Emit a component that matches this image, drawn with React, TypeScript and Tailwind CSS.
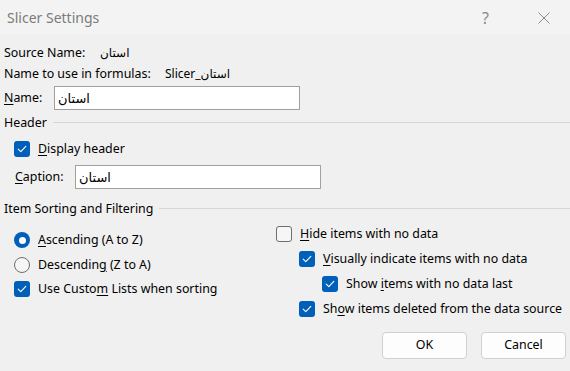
import { ReactNode } from "react";

const font = { fontFamily: '"Noto Sans", "DejaVu Sans", sans-serif' };

function U(props: { children: ReactNode }) {
    return <span className="underline underline-offset-2">{props.children}</span>;
}

function CheckBox(props: { checked: boolean }) {
    if (!props.checked) {
        return <div className="w-[16px] h-[16px] rounded-[3px] border border-[#6e6e6e] bg-[#f6f6f6] shrink-0"></div>;
    }
    return (
        <div className="w-[16px] h-[16px] rounded-[3px] bg-[#005fb8] flex items-center justify-center shrink-0">
            <svg width="10" height="8" viewBox="0 0 10 8" fill="none">
                <path d="M1.2 4.2 L3.8 6.6 L8.8 1.4" stroke="white" strokeWidth="1.1" strokeLinecap="round" strokeLinejoin="round" />
            </svg>
        </div>
    );
}

function Radio(props: { checked: boolean }) {
    if (!props.checked) {
        return <div className="w-[16px] h-[16px] rounded-full border border-[#6e6e6e] bg-[#f6f6f6] shrink-0"></div>;
    }
    return (
        <div className="w-[16px] h-[16px] rounded-full bg-[#005fb8] flex items-center justify-center shrink-0">
            <div className="w-[7px] h-[7px] rounded-full bg-white"></div>
        </div>
    );
}

function Option(props: { box: ReactNode, children: ReactNode, indent?: string }) {
    return (
        <div className={"h-[20px] flex items-center gap-[8px] " + (props.indent ?? "")}>
            {props.box}
            <span>{props.children}</span>
        </div>
    );
}

function GroupHeading(props: { title: string }) {
    return (
        <div className="h-[20px] flex items-center gap-[6px]">
            <span>{props.title}</span>
            <div className="flex-1 h-px bg-[#d6d6d6] mt-[-1px]"></div>
        </div>
    );
}

export default function App() {
    return (
        <div style={font} className="w-[570px] h-[371px] bg-[#f0f0f0] text-[12.4px] text-black flex flex-col overflow-hidden">
            <div className="h-[35px] bg-[#f3f3f3] flex items-center pl-[7px] shrink-0">
                <span className="text-[14px] text-[#7c7c7c] flex-1">Slicer Settings</span>
                <span className="text-[16px] text-[#8a8a8a] mr-[49px]">?</span>
                <svg width="12" height="12" viewBox="0 0 12 12" className="mr-[20px]">
                    <path d="M0.5 0.5 L11.5 11.5 M11.5 0.5 L0.5 11.5" stroke="#8a8a8a" strokeWidth="1" />
                </svg>
            </div>

            <div className="pl-[4px] flex flex-col">
                <div className="h-[20px] mt-[8px] flex items-center">
                    <span className="w-[96px]">Source Name:</span>
                    <span className="text-[12px]">استان</span>
                </div>
                <div className="h-[20px] mt-[1px] flex items-center">
                    <span className="w-[161px]">Name to use in formulas:</span>
                    <span className="text-[12px]">Slicer_استان</span>
                </div>
                <div className="h-[24px] mt-[2px] flex items-center">
                    <span className="w-[50px]"><U>N</U>ame:</span>
                    <input readOnly value="استان" className="w-[246px] h-[24px] border border-[#a0a0a0] bg-white px-[3px] text-[13px] outline-none" />
                </div>

                <div className="mt-[3px]">
                    <GroupHeading title="Header" />
                </div>
                <div className="mt-[6px] pl-[10px]">
                    <Option box={<CheckBox checked={true} />}><U>D</U>isplay header</Option>
                </div>
                <div className="h-[24px] mt-[6px] flex items-center pl-[11px]">
                    <span className="w-[60px]"><U>C</U>aption:</span>
                    <input readOnly value="استان" className="w-[246px] h-[24px] border border-[#a0a0a0] bg-white px-[3px] text-[13px] outline-none" />
                </div>

                <div className="mt-[10px]">
                    <GroupHeading title="Item Sorting and Filtering" />
                </div>

                <div className="flex">
                    <div className="w-[272px] pl-[10px] mt-[11px] flex flex-col gap-[5px]">
                        <Option box={<Radio checked={true} />}><U>A</U>scending (A to Z)</Option>
                        <Option box={<Radio checked={false} />}>Descendin<U>g</U> (Z to A)</Option>
                        <div className="mt-[-1px]">
                            <Option box={<CheckBox checked={true} />}>Use Custo<U>m</U> Lists when sorting</Option>
                        </div>
                    </div>
                    <div className="mt-[5px] flex flex-col gap-[5px]">
                        <Option box={<CheckBox checked={false} />}><U>H</U>ide items with no data</Option>
                        <Option box={<CheckBox checked={true} />} indent="pl-[23px]"><U>V</U>isually indicate items with no data</Option>
                        <Option box={<CheckBox checked={true} />} indent="pl-[46px]">Show <U>i</U>tems with no data last</Option>
                        <Option box={<CheckBox checked={true} />} indent="pl-[23px]">Sh<U>o</U>w items deleted from the data source</Option>
                    </div>
                </div>
            </div>

            <div className="flex justify-end gap-[14px] pr-[4px] mt-[13px]">
                <button className="w-[85px] h-[27px] rounded-[4px] border border-[#d0d0d0] bg-[#fdfdfd] text-black">OK</button>
                <button className="w-[85px] h-[27px] rounded-[4px] border border-[#d0d0d0] bg-[#fdfdfd] text-black">Cancel</button>
            </div>
        </div>
    );
}
